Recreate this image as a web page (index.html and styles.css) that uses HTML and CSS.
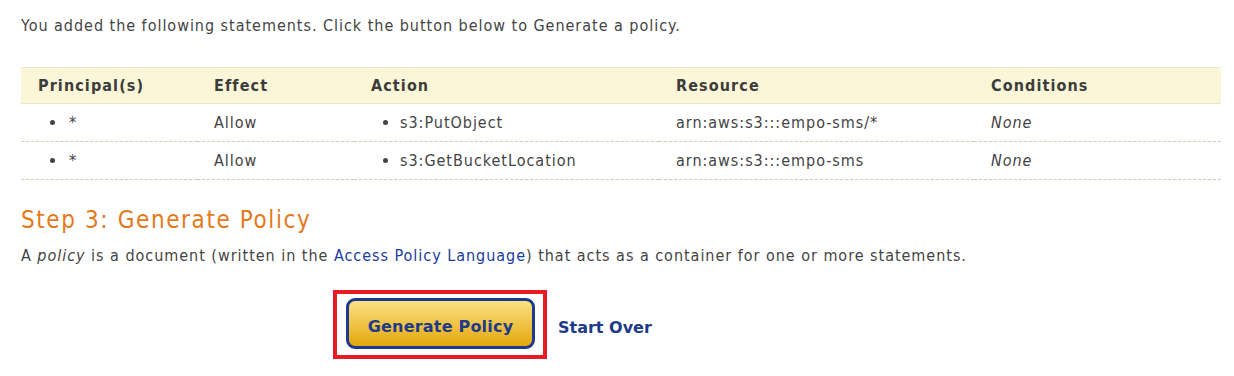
FILE: index.html
```html
<!DOCTYPE html>
<html lang="en">
<head>
    <meta charset="UTF-8">
    <title>AWS Policy Generator</title>
    <link rel="stylesheet" href="styles.css">
</head>
<body>
    <div class="page">
        <p class="intro">You added the following statements. Click the button below to Generate a policy.</p>

        <table class="statements">
            <thead>
                <tr>
                    <th class="col-principal">Principal(s)</th>
                    <th class="col-effect">Effect</th>
                    <th class="col-action">Action</th>
                    <th class="col-resource">Resource</th>
                    <th class="col-conditions">Conditions</th>
                </tr>
            </thead>
            <tbody>
                <tr>
                    <td class="principal"><ul><li>*</li></ul></td>
                    <td>Allow</td>
                    <td class="action"><ul><li>s3:PutObject</li></ul></td>
                    <td>arn:aws:s3:::empo-sms/*</td>
                    <td><em>None</em></td>
                </tr>
                <tr>
                    <td class="principal"><ul><li>*</li></ul></td>
                    <td>Allow</td>
                    <td class="action"><ul><li>s3:GetBucketLocation</li></ul></td>
                    <td>arn:aws:s3:::empo-sms</td>
                    <td><em>None</em></td>
                </tr>
            </tbody>
        </table>

        <h2>Step 3: Generate Policy</h2>
        <p class="desc">A <em>policy</em> is a document (written in the <a href="#">Access Policy Language</a>) that acts as a container for one or more statements.</p>

        <div class="actions">
            <div class="highlight">
                <button type="button" class="btn-generate">Generate Policy</button>
            </div>
            <a href="#" class="start-over">Start Over</a>
        </div>
    </div>
</body>
</html>
```

FILE: styles.css
```css
:root {
    --text-color: #444;
    --orange: #e4791b;
    --navy: #1e3a8a;
    --link: #1a3c9e;
    --header-bg: #fbf6d8;
    --header-border: #ece6c4;
    --row-border: #cdd0b0;
}

body {
    margin: 0;
    background: #fff;
    color: var(--text-color);
    font-family: "DejaVu Sans Condensed", "DejaVu Sans", sans-serif;
    font-size: 16px;
    letter-spacing: 0.97px;
}

.page {
    padding: 14px 13px 0 21px;
}

.intro {
    margin: 0 0 29px 0;
    line-height: 24px;
}

.statements {
    width: 1200px;
    border-collapse: collapse;
}

.statements th {
    text-align: left;
    font-family: "DejaVu Sans Condensed", sans-serif;
    font-weight: 700;
    font-size: 16px;
    letter-spacing: 1.1px;
    color: #3c3c3c;
    background: var(--header-bg);
    border-top: 1px solid var(--header-border);
    border-bottom: 1px solid var(--header-border);
    height: 35px;
    padding: 0 0 0 17px;
}

.statements td {
    height: 37px;
    padding: 0 0 0 17px;
    border-bottom: 1px dashed var(--row-border);
}

.col-principal { width: 159px; }
.col-effect { width: 140px; }
.col-action { width: 288px; }
.col-resource { width: 298px; }

.statements ul {
    margin: 0;
    padding: 0;
}

.principal ul {
    padding-left: 29px;
}

.action ul {
    padding-left: 29px;
}

.principal li {
    padding-left: 2px;
}

h2 {
    margin: 25px 0 0 0;
    color: var(--orange);
    font-weight: 400;
    font-size: 24px;
    letter-spacing: 1.6px;
    line-height: 30px;
}

.desc {
    margin: 9px 0 0 0;
    line-height: 24px;
}

.desc a {
    color: var(--link);
    text-decoration: none;
}

.actions {
    display: flex;
    align-items: center;
    margin-top: 22px;
    padding-left: 312px;
    gap: 11px;
    letter-spacing: 0;
}

.highlight {
    border: 4px solid #e81b24;
    padding: 4px 8px 6px 9px;
}

.btn-generate {
    display: block;
    width: 189px;
    height: 51px;
    border: 3px solid var(--navy);
    border-radius: 9px;
    background: linear-gradient(#fbe283, #e3a70c);
    color: var(--navy);
    font-family: "DejaVu Sans", sans-serif;
    font-weight: 700;
    font-size: 16px;
    letter-spacing: 0.2px;
    padding: 5px 0 0 0;
    cursor: pointer;
}

.start-over {
    margin-top: 6px;
    color: var(--navy);
    font-family: "DejaVu Sans", sans-serif;
    font-weight: 700;
    font-size: 16px;
    text-decoration: none;
}
```
